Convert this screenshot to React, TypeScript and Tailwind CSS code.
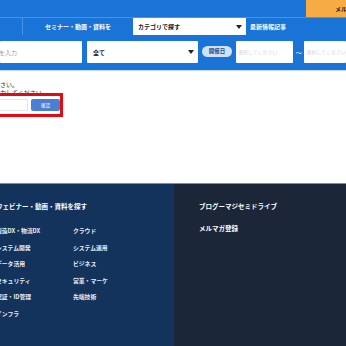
const navFont = { fontFamily: '"Noto Sans CJK JP", "Noto Sans", sans-serif' };

const leftLinks = ["製造DX・物流DX", "システム開発", "データ活用", "セキュリティ", "認証・ID管理", "インフラ"];
const rightLinks = ["クラウド", "システム運用", "ビジネス", "営業・マーケ", "先端技術"];

function Caret() {
  return (
    <svg width="6" height="4" viewBox="0 0 6 4" className="shrink-0">
      <path d="M0 0h6L3 4z" fill="#222" />
    </svg>
  );
}

export default function App() {
  return (
    <div className="w-[346px] h-[346px] overflow-hidden bg-white text-gray-800" style={navFont}>
      {/* top bar */}
      <div className="h-[17px] bg-[#1a73d6] flex justify-end">
        <div className="w-[40px] bg-[#f6ab45] flex items-center pl-[29px] text-[6px] font-bold text-gray-900 whitespace-nowrap overflow-hidden">
          メルマガ登録
        </div>
      </div>

      {/* nav row */}
      <div className="h-[18px] bg-[#1a73d6] border-t border-[#4d92e0] flex items-stretch text-white text-[6px] font-bold whitespace-nowrap">
        <div className="w-[23px] border-r border-[#4d92e0]" />
        <div className="w-[110px] flex items-center justify-center">セミナー・動画・資料を</div>
        <div className="w-[113px] bg-white text-gray-900 flex items-center justify-between pl-[5px] pr-[4px]">
          <span>カテゴリで探す</span>
          <Caret />
        </div>
        <div className="flex items-center pl-[4px]">最新情報記事</div>
      </div>

      {/* search row */}
      <div className="h-[35px] bg-[#1a73d6] flex items-start pt-[6px] text-[6px] whitespace-nowrap">
        <div className="w-[82px] h-[22px] bg-white rounded-[1px] flex items-center justify-end pr-[65px] text-gray-400">
          を入力
        </div>
        <div className="ml-[5px] w-[112px] h-[22px] bg-white rounded-[1px] flex items-center justify-between pl-[6px] pr-[4px] font-bold text-gray-900">
          <span>全て</span>
          <Caret />
        </div>
        <div className="ml-[4px] mt-[5px] w-[30px] h-[11px] rounded-full bg-[#cfe3f7] flex items-center justify-center text-[5.5px] font-bold text-[#1a4f8f]">
          開催日
        </div>
        <div className="ml-[4px] w-[58px] h-[22px] bg-white rounded-[1px] flex items-center pl-[2px] text-[5px] text-gray-300">
          選択してください
        </div>
        <div className="w-[11px] h-[22px] flex items-center justify-center text-white text-[6px]">〜</div>
        <div className="flex-1 h-[22px] bg-white rounded-[1px] flex items-center pl-[2px] text-[5px] text-gray-300">
          選択してください
        </div>
      </div>
      <div className="h-px bg-[#c6dcf3]" />

      {/* content */}
      <div className="h-[112px] relative text-[6px] text-gray-800 leading-[8px]">
        <div className="pt-[10px] -ml-[6px]">
          <p>ださい。</p>
          <p>入力してください</p>
        </div>
        <div className="absolute left-[-10px] top-[22px] w-[73px] h-[24px] border-[3px] border-[#e50914] bg-white flex items-center gap-[3px]">
          <div className="ml-[6px] w-[30px] h-[12px] border border-gray-200 bg-white" />
          <div className="w-[30px] h-[12px] rounded-[2px] bg-[#4b7fd1] flex items-center justify-center text-white text-[4.5px]">
            確認
          </div>
        </div>
      </div>

      {/* footer */}
      <div className="h-[163px] flex border-t border-[#7d8ea8]">
        <div className="w-[174px] bg-[#13325c] text-white font-bold pt-[17px] pb-[2px] flex flex-col">
          <div className="-ml-[4px] text-[6.5px] leading-[10px] whitespace-nowrap">ウェビナー・動画・資料を探す</div>
          <div className="mt-[16px] grid grid-cols-[77px_1fr] gap-y-[9px] -ml-[4px] text-[5.8px] leading-[7.5px] text-[#e6ecf5] whitespace-nowrap">
            {leftLinks.map((l, i) => (
              <>
                <div key={"l" + i}>{l}</div>
                <div key={"r" + i}>{rightLinks[i] ?? ""}</div>
              </>
            ))}
          </div>
        </div>
        <div className="flex-1 bg-[#1b2638] text-white font-bold text-[6.5px] leading-[10px] pt-[17px] pl-[25px] whitespace-nowrap">
          <div>ブログーマジセミドライブ</div>
          <div className="mt-[12px]">メルマガ登録</div>
        </div>
      </div>
    </div>
  );
}
